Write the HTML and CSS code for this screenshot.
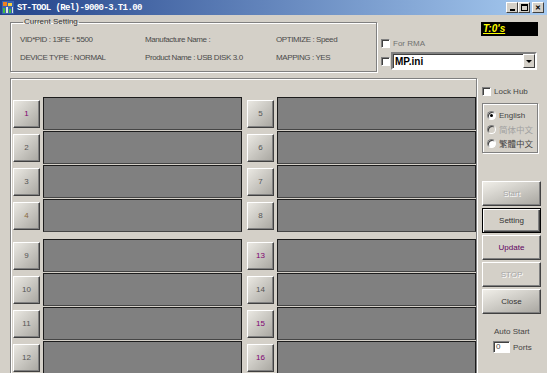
FILE: index.html
```html
<!DOCTYPE html>
<html lang="en">
<head>
    <meta charset="UTF-8">
    <title>ST-TOOL</title>
    <link rel="stylesheet" href="styles.css">
</head>
<body>
<div class="window">
    <div class="titlebar">
        <svg class="app-icon" width="12" height="13" viewBox="0 0 12 13">
            <rect x="0" y="0" width="12" height="13" fill="#3a62b0"/>
            <rect x="1" y="1" width="4" height="4" fill="#f08020"/>
            <rect x="6" y="2" width="4" height="3" fill="#f8d040"/>
            <rect x="1" y="7" width="2" height="5" fill="#40c040"/>
            <rect x="4" y="6" width="2" height="6" fill="#e0e0e0"/>
            <rect x="7" y="8" width="2" height="4" fill="#40c040"/>
            <rect x="10" y="6" width="1" height="6" fill="#e0e0e0"/>
        </svg>
        <span class="title">ST-TOOL (Rel)-9000-3.T1.00</span>
        <div class="win-btns">
            <span class="win-btn"><span class="glyph-min"></span></span>
            <span class="win-btn"><span class="glyph-max"></span></span>
            <span class="win-btn close">&#x2715;</span>
        </div>
    </div>

    <div class="client">
        <div class="top-row">
            <fieldset class="current">
                <legend>Current Setting</legend>
                <div class="info-grid">
                    <span>VID*PID : 13FE * 5500</span>
                    <span>Manufacture Name :</span>
                    <span>OPTIMIZE : Speed</span>
                    <span>DEVICE TYPE : NORMAL</span>
                    <span>Product Name : USB DISK 3.0</span>
                    <span>MAPPING : YES</span>
                </div>
            </fieldset>
            <div class="top-side">
                <div class="timer"><span>T:0's</span></div>
                <div class="check-row rma"><span class="check"></span><span class="dim">For RMA</span></div>
                <div class="check-row mp">
                    <span class="check"></span>
                    <div class="combo">
                        <span class="combo-text">MP.ini</span>
                        <span class="combo-btn"><span class="arrow"></span></span>
                    </div>
                </div>
            </div>
        </div>

        <div class="main-row">
            <div class="ports">
                <div class="port-block">
                    <div class="port"><button class="port-btn purple">1</button><div class="panel"></div></div>
                    <div class="port"><button class="port-btn">2</button><div class="panel"></div></div>
                    <div class="port"><button class="port-btn">3</button><div class="panel"></div></div>
                    <div class="port"><button class="port-btn brown">4</button><div class="panel"></div></div>
                    <div class="port"><button class="port-btn">5</button><div class="panel"></div></div>
                    <div class="port"><button class="port-btn">6</button><div class="panel"></div></div>
                    <div class="port"><button class="port-btn">7</button><div class="panel"></div></div>
                    <div class="port"><button class="port-btn">8</button><div class="panel"></div></div>
                </div>
                <div class="port-block second">
                    <div class="port"><button class="port-btn">9</button><div class="panel"></div></div>
                    <div class="port"><button class="port-btn">10</button><div class="panel"></div></div>
                    <div class="port"><button class="port-btn">11</button><div class="panel"></div></div>
                    <div class="port"><button class="port-btn">12</button><div class="panel"></div></div>
                    <div class="port"><button class="port-btn purple">13</button><div class="panel"></div></div>
                    <div class="port"><button class="port-btn">14</button><div class="panel"></div></div>
                    <div class="port"><button class="port-btn purple">15</button><div class="panel"></div></div>
                    <div class="port"><button class="port-btn purple">16</button><div class="panel"></div></div>
                </div>
            </div>

            <div class="side">
                <div class="check-row lock"><span class="check"></span><span>Lock Hub</span></div>
                <div class="lang-box">
                    <div class="radio-row"><span class="radio on"></span><span>English</span></div>
                    <div class="radio-row off"><span class="radio"></span><span class="cjk">简体中文</span></div>
                    <div class="radio-row"><span class="radio"></span><span class="cjk">繁體中文</span></div>
                </div>
                <div class="actions">
                    <button class="act shaded disabled">Start</button>
                    <button class="act default">Setting</button>
                    <button class="act purple">Update</button>
                    <button class="act disabled">STOP</button>
                    <button class="act shaded">Close</button>
                </div>
                <div class="auto-start">
                    <div>Auto Start</div>
                    <div class="auto-row"><span class="num-box">0</span><span>Ports</span></div>
                </div>
            </div>
        </div>
    </div>
</div>
</body>
</html>
```

FILE: styles.css
```css
body {
    margin: 0;
    width: 547px;
    height: 373px;
    overflow: hidden;
    background-color: #d4d0c8;
    font-family: "Liberation Sans", Arial, sans-serif;
    font-size: 8px;
    color: #3c3c3c;
}
.window {
    width: 547px;
    height: 373px;
    overflow: hidden;
}
.titlebar {
    height: 15px;
    display: flex;
    align-items: center;
    padding: 0 2px;
    background: linear-gradient(to right, #23438a, #a6caf0);
}
.app-icon {
    flex: none;
}
.title {
    margin-left: 3px;
    color: #fff;
    font-family: "Liberation Mono", monospace;
    font-weight: bold;
    font-size: 9px;
    letter-spacing: -0.6px;
}
.win-btns {
    margin-left: auto;
    display: flex;
    margin-right: 1px;
}
.win-btn {
    width: 10px;
    height: 9px;
    background-color: #d4d0c8;
    border: 1px solid;
    border-color: #fff #404040 #404040 #fff;
    display: flex;
    align-items: center;
    justify-content: center;
    color: #000;
    font-size: 7px;
    font-weight: bold;
}
.win-btn.close {
    margin-left: 2px;
}
.glyph-min {
    width: 5px;
    height: 2px;
    background: #000;
    margin-top: 5px;
}
.glyph-max {
    width: 5px;
    height: 4px;
    border: 1px solid #000;
    border-top-width: 2px;
}

/* top area */
.client {
    padding-left: 10px;
}
.top-row {
    display: flex;
    height: 57px;
}
.current {
    margin: 2px 0 0;
    width: 367px;
    height: 55px;
    box-sizing: border-box;
    padding: 3px 0 0 9px;
    border: 1px solid #808080;
    box-shadow: inset 1px 1px 0 #fff, 1px 1px 0 #fff;
}
.current legend {
    padding: 0 1px;
    margin-left: 3px;
    line-height: 10px;
    color: #333;
}
.info-grid {
    display: grid;
    grid-template-columns: 125px 131px 1fr;
    grid-auto-rows: 18px;
    align-items: center;
    letter-spacing: -0.4px;
    color: #4a4a4a;
}
.top-side {
    flex: 1;
    padding: 7px 9px 0 4px;
    display: flex;
    flex-direction: column;
}
.timer {
    align-self: flex-end;
    width: 57px;
    height: 14px;
    background: #000;
    box-sizing: border-box;
    padding-left: 2px;
    color: #ffff00;
    font-weight: bold;
    font-style: italic;
    font-size: 10px;
    line-height: 14px;
}
.timer span {
    text-decoration: underline;
}
.check-row {
    display: flex;
    align-items: center;
    gap: 3px;
}
.check {
    flex: none;
    width: 7px;
    height: 7px;
    background: #fff;
    border: 1px solid;
    border-color: #808080 #fff #fff #808080;
    box-shadow: inset 1px 1px 0 #404040;
}
.rma {
    margin-top: 2px;
    height: 10px;
}
.dim {
    color: #707070;
}
.mp {
    margin-top: 4px;
    gap: 0;
}
.combo {
    margin-left: 1px;
    width: 146px;
    height: 18px;
    box-sizing: border-box;
    background: #fff;
    border: 2px solid;
    border-color: #808080 #fff #fff #808080;
    box-shadow: inset 1px 1px 0 #404040;
    display: flex;
    align-items: center;
}
.combo-text {
    padding-left: 2px;
    font-size: 10px;
    font-weight: bold;
    color: #000;
}
.combo-btn {
    margin-left: auto;
    width: 10px;
    height: 12px;
    background: #d4d0c8;
    border: 1px solid;
    border-color: #fff #404040 #404040 #fff;
    display: flex;
    align-items: center;
    justify-content: center;
}
.arrow {
    border-left: 3px solid transparent;
    border-right: 3px solid transparent;
    border-top: 3px solid #000;
}

/* main area */
.main-row {
    display: flex;
    margin-top: 6px;
}
.ports {
    width: 467px;
    height: 320px;
    box-sizing: border-box;
    border: 1px solid #808080;
    box-shadow: inset 1px 1px 0 #fff, 1px 1px 0 #fff;
    padding: 18px 0 0 2px;
}
.port-block {
    display: grid;
    grid-template-columns: 229px 229px;
    grid-template-rows: repeat(4, 33px);
    grid-auto-flow: column;
    column-gap: 5px;
    row-gap: 1px;
}
.port-block.second {
    margin-top: 7px;
}
.port {
    display: grid;
    grid-template-columns: 27px 1fr;
    column-gap: 3px;
    align-items: center;
}
.port-btn {
    height: 28px;
    padding: 0;
    font-family: "Liberation Sans", Arial, sans-serif;
    font-size: 8px;
    color: #555;
    background: linear-gradient(135deg, #eae8e2, #a8a6a0);
    border: 1px solid;
    border-color: #fff #404040 #404040 #fff;
    box-shadow: inset -1px -1px 0 #808080;
}
.port-btn.purple {
    color: #800070;
}
.port-btn.brown {
    color: #8a6a40;
}
.panel {
    height: 33px;
    box-sizing: border-box;
    background: #808080;
    border: 1px solid #1c1c1c;
    border-bottom-color: #454545;
}

/* side controls */
.side {
    width: 70px;
    padding-left: 5px;
    box-sizing: border-box;
}
.lock {
    margin-top: 9px;
    height: 9px;
}
.lock span:last-child {
    color: #444;
}
.lang-box {
    margin-top: 7px;
    width: 56px;
    height: 50px;
    box-sizing: border-box;
    border: 1px solid #808080;
    box-shadow: inset 1px 1px 0 #fff, 1px 1px 0 #fff;
    padding: 4px 0 0 4px;
}
.radio-row {
    height: 14px;
    display: flex;
    align-items: center;
    gap: 3px;
    color: #444;
}
.radio-row.off {
    color: #a0a0a0;
}
.radio {
    width: 7px;
    height: 7px;
    border-radius: 50%;
    background: #fff;
    border: 1px solid;
    border-color: #808080 #fff #fff #808080;
    box-shadow: inset 1px 1px 0 #404040;
    display: flex;
    align-items: center;
    justify-content: center;
}
.radio.on::after {
    content: "";
    width: 3px;
    height: 3px;
    border-radius: 50%;
    background: #000;
}
.radio-row.off .radio {
    background: #d4d0c8;
}
.cjk {
    font-family: "Noto Sans CJK TC", "Noto Sans CJK SC", sans-serif;
    font-size: 8.5px;
}
.actions {
    margin-top: 28px;
    display: flex;
    flex-direction: column;
    gap: 2px;
}
.act {
    width: 59px;
    height: 25px;
    padding: 0;
    font-family: "Liberation Sans", Arial, sans-serif;
    font-size: 8px;
    color: #333;
    background: #d4d0c8;
    border: 1px solid;
    border-color: #fff #404040 #404040 #fff;
    box-shadow: inset -1px -1px 0 #808080;
}
.act.shaded {
    background: linear-gradient(160deg, #f0eee8, #a8a6a0);
}
.act.default {
    border: 1px solid #000;
    box-shadow: inset 1px 1px 0 #fff, inset -1px -1px 0 #404040, inset -2px -2px 0 #808080;
}
.act.purple {
    color: #600060;
}
.act.disabled {
    color: #a8a8a8;
    text-shadow: 1px 1px 0 #fff;
}
.auto-start {
    margin-top: 13px;
    padding-left: 11px;
    color: #444;
}
.auto-start > div:first-child {
    padding-left: 1px;
}
.auto-row {
    margin-top: 5px;
    display: flex;
    align-items: center;
    gap: 3px;
}
.num-box {
    width: 17px;
    height: 12px;
    box-sizing: border-box;
    background: #fff;
    border: 1px solid;
    border-color: #808080 #fff #fff #808080;
    box-shadow: inset 1px 1px 0 #404040;
    padding-left: 2px;
    line-height: 10px;
}
```
